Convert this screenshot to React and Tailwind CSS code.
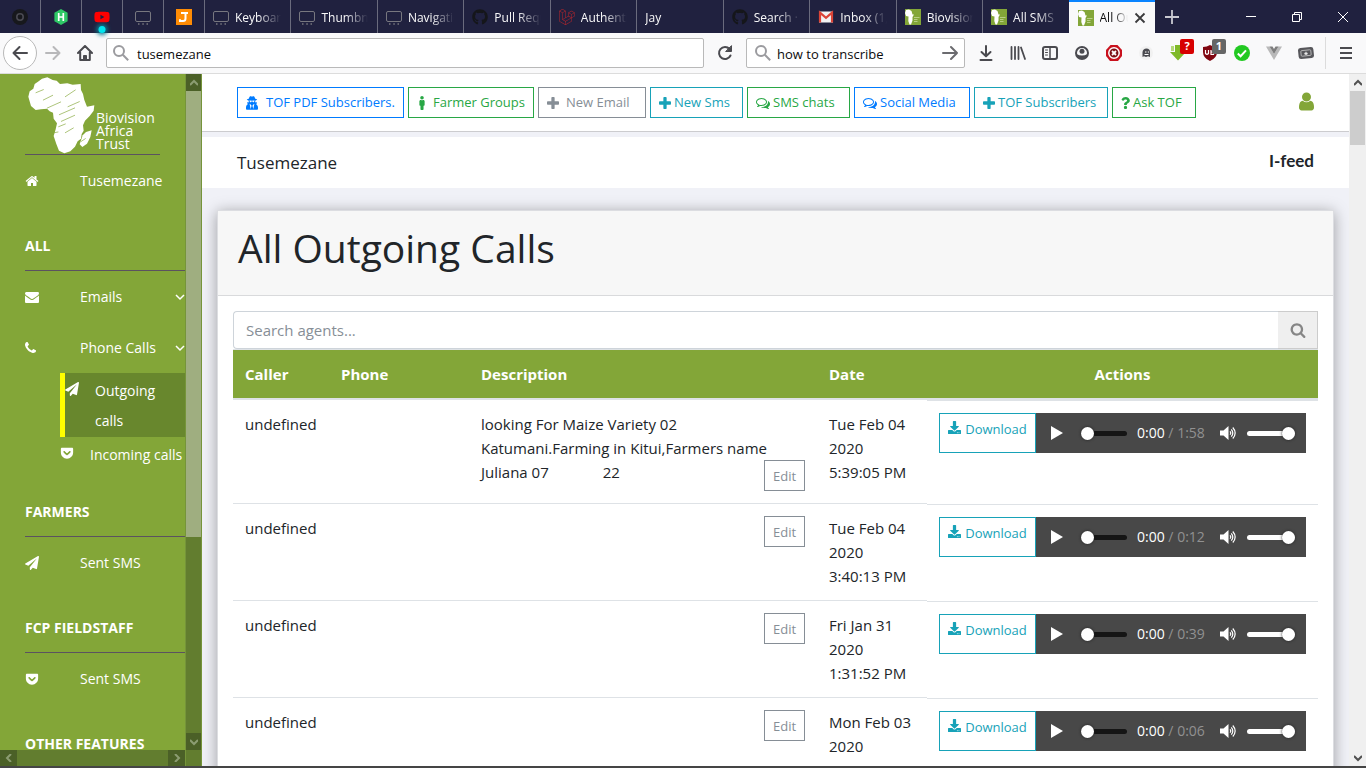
import React from "react";
import {
  FaDownload,
  FaGetPocket,
  FaGithub,
  FaLaravel,
  FaMale,
  FaPaperPlane,
  FaQuestion,
  FaUserSecret,
  FaYoutube,
} from "react-icons/fa";

const GLYPHS = {
  home: "M1472 992v480q0 26-19 45t-45 19h-384v-384h-256v384h-384q-26 0-45-19t-19-45v-480q0-1 .5-3t.5-3l575-474 575 474q1 2 1 6zm223-69l-62 74q-8 9-21 11h-3q-13 0-21-7l-692-577-692 577q-12 8-24 7-13-2-21-11l-62-74q-8-10-7-23.5t11-21.5l719-599q32-26 76-26t76 26l244 204v-195q0-14 9-23t23-9h192q14 0 23 9t9 23v408l219 182q10 8 11 21.5t-7 23.5z",
  envelope:
    "M1792 710v794q0 66-47 113t-113 47h-1472q-66 0-113-47t-47-113v-794q44 49 101 87 362 246 497 345 57 42 92.5 65.5t94.5 48 110 24.5h2q51 0 110-24.5t94.5-48 92.5-65.5q170-123 498-345 57-39 100-87zm0-294q0 79-49 151t-122 123q-376 261-468 325-10 7-42.5 31t-54 38.5-52 32.5-57.5 27-50 9h-2q-23 0-50-9t-57.5-27-52-32.5-54-38.5-42.5-31q-91-64-262-182.5t-205-142.5q-62-42-117-115.5t-55-136.5q0-78 41.5-130t118.5-52h1472q65 0 112.5 47t47.5 113z",
  phone:
    "M1600 1240q0 27-10 70.5t-21 68.5q-21 50-122 106-94 51-186 51-27 0-53-3.5t-57.5-12.5-47-14.5-55.5-20.5-49-18q-98-35-175-83-127-79-264-216t-216-264q-48-77-83-175-3-9-18-49t-20.5-55.5-14.5-47-12.5-57.5-3.5-53q0-92 51-186 56-101 106-122 25-11 68.5-21t70.5-10q14 0 21 3 18 6 53 76 11 19 30 54t35 63.5 31 53.5q3 4 17.5 25t21.5 35.5 7 28.5q0 20-28.5 50t-62 55-62 53-28.5 46q0 9 5 22.5t8.5 20.5 14 24 11.5 19q76 137 174 235t235 174q2 1 19 11.5t24 14 20.5 8.5 22.5 5q18 0 46-28.5t53-62 55-62 50-28.5q14 0 28.5 7t35.5 21.5 25 17.5q25 15 53.5 31t63.5 35 54 30q70 35 76 53 3 7 3 21z",
  search:
    "M1216 832q0-185-131.5-316.5t-316.5-131.5-316.5 131.5-131.5 316.5 131.5 316.5 316.5 131.5 316.5-131.5 131.5-316.5zm512 832q0 52-38 90t-90 38q-54 0-90-38l-343-342q-179 124-399 124-143 0-273.5-55.5t-225-150-150-225-55.5-273.5 55.5-273.5 150-225 225-150 273.5-55.5 273.5 55.5 225 150 150 225 55.5 273.5q0 220-124 399l343 343q37 37 37 90z",
  plus: "M1600 736v192q0 40-28 68t-68 28h-416v416q0 40-28 68t-68 28h-192q-40 0-68-28t-28-68v-416h-416q-40 0-68-28t-28-68v-192q0-40 28-68t68-28h416v-416q0-40 28-68t68-28h192q40 0 68 28t28 68v416h416q40 0 68 28t28 68z",
  comments:
    "M704 384q-153 0-286 52t-211.5 141-78.5 191q0 82 53 158t149 132l97 56-35 84q34-20 62-39l44-31 53 10q78 14 153 14 153 0 286-52t211.5-141 78.5-191-78.5-191-211.5-141-286-52zm0-128q191 0 353.5 68.5t256.5 186.5 94 257-94 257-256.5 186.5-353.5 68.5q-86 0-176-16-124 88-278 128-36 9-86 16h-3q-11 0-20.5-8t-11.5-21q-1-3-1-6.5t.5-6.5 2-6l2.5-5 3.5-5.5 4-5 4.5-5 4-4.5q5-6 23-25t26-29.5 22.5-29 25-38.5 20.5-44q-124-72-195-177t-71-224q0-139 94-257t256.5-186.5 353.5-68.5zm822 1169q10 24 20.5 44t25 38.5 22.5 29 26 29.5 23 25q1 1 4 4.5t4.5 5 4 5 3.5 5.5l2.5 5 2 6 .5 6.5-1 6.5q-3 14-13 22t-22 7q-50-7-86-16-154-40-278-128-90 16-176 16-271 0-472-132 58 4 88 4 161 0 309-45t264-129q125-92 192-212t67-254q0-77-23-152 129 71 204 178t75 230q0 120-71 224.5t-195 176.5z",
  user: "M1536 1399q0 109-62.5 187t-150.5 78h-854q-88 0-150.5-78t-62.5-187q0-85 8.5-160.5t31.5-152 58.5-131 94-89 134.5-34.5q131 128 313 128t313-128q76 0 134.5 34.5t94 89 58.5 131 31.5 152 8.5 160.5zm-256-887q0 159-112.5 271.5t-271.5 112.5-271.5-112.5-112.5-271.5 112.5-271.5 271.5-112.5 271.5 112.5 112.5 271.5z",
};

function Glyph({ name, viewBox = "0 0 1792 1792", className = "size-[14px]" }) {
  return (
    <svg viewBox={viewBox} fill="currentColor" aria-hidden="true" className={`shrink-0 ${className}`}>
      <path d={GLYPHS[name]} />
    </svg>
  );
}

const Plus = () => <Glyph name="plus" viewBox="192 128 1408 1408" className="size-3" />;

/* ---------- Browser tabs ---------- */

const DiscIcon = () => (
  <svg viewBox="0 0 16 16" className="size-4">
    <circle cx="8" cy="8" r="8" fill="#17181c" />
    <circle cx="8" cy="8" r="3.2" fill="none" stroke="#4a4a52" strokeWidth="1.6" />
  </svg>
);
const HexIcon = () => (
  <svg viewBox="0 0 16 16" className="size-4">
    <path d="M8 0l6.600 3.800v8.400L8 16l-6.600-3.800V3.800z" fill="#2ec866" />
    <path d="M5.700 4v8M10.300 4v8M5.700 8h4.600" stroke="#fff" strokeWidth="1.700" />
  </svg>
);
const MonitorIcon = () => (
  <svg viewBox="0 0 16 16" className="size-4" fill="none" stroke="#77777f">
    <rect x=".5" y="2.500" width="15" height="10" rx="1.500" />
    <path d="M3 15h1.500M7.300 15h1.500M11.500 15H13" strokeWidth="1.500" />
  </svg>
);
const JIcon = () => (
  <svg viewBox="0 0 16 16" className="size-4">
    <rect width="16" height="16" fill="#ff8c05" />
    <path d="M5 4h7M9.500 4v5.500q0 2.500-2.500 2.500H4v-1.700" fill="none" stroke="#fff" strokeWidth="2" />
  </svg>
);
const MailIcon = () => (
  <svg viewBox="0 0 16 16" className="size-4">
    <rect x="1" y="2.500" width="14" height="11" fill="#f2f2f2" />
    <path d="M2 13.500V3.600l6 5.200 6-5.200v9.900" fill="none" stroke="#db4437" strokeWidth="2.200" />
  </svg>
);
const AfricaIcon = () => (
  <svg viewBox="0 0 16 16" className="size-4">
    <rect width="16" height="16" fill="#83a638" />
    <path d="M0 4l1-3 3-.5L6.500 2 7.500 5.500H9L7.500 8v3.500L6 15.500H4.500L3.300 12l.2-4.500L1 7z" fill="#fff" />
    <path d="M9 8.500h5.500M9 10.500h3.500M9 12.500h3.500" stroke="#b9ce86" />
  </svg>
);

const PINNED = [
  { label: "Meet", icon: <DiscIcon /> },
  { label: "Challenges", icon: <HexIcon /> },
  { label: "Video", icon: <FaYoutube className="size-4 text-[#ff0000]" />, playing: true },
  { label: "Slides", icon: <MonitorIcon /> },
  { label: "Editor", icon: <JIcon /> },
];

const TABS = [
  { label: "Keyboard", icon: <MonitorIcon /> },
  { label: "Thumbnail", icon: <MonitorIcon /> },
  { label: "Navigation", icon: <MonitorIcon /> },
  { label: "Pull Requests", icon: <FaGithub className="size-4 text-[#15161a]" /> },
  { label: "Authentication", icon: <FaLaravel className="size-4 text-[#b8262c]" /> },
  { label: "Jay" },
  { label: "Search · code", icon: <FaGithub className="size-4 text-[#15161a]" /> },
  { label: "Inbox (1,204)", icon: <MailIcon /> },
  { label: "Biovision", icon: <AfricaIcon /> },
  { label: "All SMS", icon: <AfricaIcon /> },
];

function TabStrip() {
  return (
    <div className="flex h-[33px] shrink-0 bg-[#20213f] text-xs text-[#f9f9fa]">
      {PINNED.map((t) => (
        <button
          key={t.label}
          aria-label={t.label}
          className="relative flex w-[41px] shrink-0 items-center justify-center border-r border-[#6a6b7d]"
        >
          {t.icon}
          {t.playing && (
            <span className="absolute bottom-0 left-1/2 size-[7px] -translate-x-1/2 rounded-full bg-[#00e5ee] shadow-[0_0_4px_2px_#0a7f95]" />
          )}
        </button>
      ))}
      {TABS.map((t, i) => (
        <button
          key={t.label}
          className={`flex min-w-0 flex-1 items-center gap-[6px] pr-[9px] pl-2 ${
            i < TABS.length - 1 ? "border-r border-[#6a6b7d]" : ""
          }`}
        >
          {t.icon && <span className="shrink-0">{t.icon}</span>}
          <span className="min-w-0 flex-1 overflow-hidden pt-[2px] text-left whitespace-nowrap [mask-image:linear-gradient(to_right,#000_50%,transparent)]">
            {t.label}
          </span>
        </button>
      ))}
      <div className="flex min-w-0 flex-1 items-center gap-[6px] border-t-2 border-[#0a84ff] bg-[#f9f9fa] px-[9px] text-[#0c0c0d]">
        <span className="shrink-0">
          <AfricaIcon />
        </span>
        <span className="min-w-0 flex-1 overflow-hidden whitespace-nowrap [mask-image:linear-gradient(to_right,#000_50%,transparent)]">
          All Outgoing
        </span>
        <button aria-label="Close tab">
          <svg viewBox="0 0 12 12" className="size-3" stroke="#3b3b3d" strokeWidth="1.800">
            <path d="M1.500 1.500l9 9M10.500 1.500l-9 9" />
          </svg>
        </button>
      </div>
      <div className="flex w-[211px] shrink-0 items-center text-white">
        <button aria-label="New tab" className="flex w-[34px] justify-center">
          <svg viewBox="0 0 14 14" className="size-[14px]" stroke="#c9c9d1" strokeWidth="1.800">
            <path d="M7 0v14M0 7h14" />
          </svg>
        </button>
        <div className="ml-auto flex">
          <button aria-label="Minimize" className="flex w-[46px] justify-center">
            <svg viewBox="0 0 10 10" className="size-[10px]" stroke="#fff">
              <path d="M0 4.500h10" />
            </svg>
          </button>
          <button aria-label="Restore" className="flex w-[46px] justify-center">
            <svg viewBox="0 0 10 10" className="size-[10px]" stroke="#fff" fill="none">
              <path d="M.5 2.500h7v7h-7zM2.500 2.500v-2h7v7h-2" />
            </svg>
          </button>
          <button aria-label="Close window" className="flex w-[46px] justify-center">
            <svg viewBox="0 0 10 10" className="size-[10px]" stroke="#fff">
              <path d="M0 0l10 10M10 0L0 10" />
            </svg>
          </button>
        </div>
      </div>
    </div>
  );
}

/* ---------- Browser toolbar ---------- */

const line = { fill: "none", stroke: "#4a4a4f", strokeWidth: 2, strokeLinecap: "round", strokeLinejoin: "round" };

const Magnifier = () => (
  <svg viewBox="0 0 16 16" className="size-4 shrink-0" fill="none" stroke="#9b9b9f" strokeWidth="2">
    <circle cx="6" cy="6" r="5" />
    <path d="M9.800 9.800l5.400 5.400" />
  </svg>
);

const EXTENSIONS = [
  {
    label: "Downloads",
    icon: (
      <svg viewBox="0 0 16 16" className="size-4" {...line}>
        <path d="M8 1v10M3.500 7L8 11.300 12.500 7M2.500 15h11" />
      </svg>
    ),
  },
  {
    label: "Library",
    icon: (
      <svg viewBox="0 0 16 16" className="size-4" {...line}>
        <path d="M1.500 2v12M5 2v12M8.500 2v12M11 2.500l4 11.500" strokeWidth="1.800" />
      </svg>
    ),
  },
  {
    label: "Sidebars",
    icon: (
      <svg viewBox="0 0 16 16" className="size-4" {...line}>
        <rect x="1" y="2" width="14" height="12" rx="2" />
        <path d="M8 2v12" strokeWidth="1.500" />
        <path d="M3.500 5h2M3.500 7.500h2M3.500 10h2" strokeWidth="1" />
      </svg>
    ),
  },
  {
    label: "Account",
    icon: (
      <svg viewBox="0 0 16 16" className="size-4">
        <circle cx="8" cy="8" r="6" fill="none" stroke="#4a4a4f" strokeWidth="2" />
        <circle cx="8" cy="6.300" r="2.500" fill="#4a4a4f" />
        <path d="M2.500 9q5.500 3 11 0-1 5-5.500 5T2.500 9z" fill="#4a4a4f" />
      </svg>
    ),
  },
  {
    label: "Blocker",
    icon: (
      <svg viewBox="0 0 16 16" className="size-4">
        <path d="M4.500 0h7L16 5v6l-4 5H4L0 11V5z" fill="#c9111d" />
        <circle cx="8" cy="8" r="5.200" fill="#7d1016" stroke="#fff" strokeWidth="1.500" />
        <path d="M6 6l4 4M10 6l-4 4" stroke="#fff" strokeWidth="1.800" />
      </svg>
    ),
  },
  {
    label: "Ghost",
    icon: (
      <svg viewBox="0 0 16 16" className="size-4">
        <circle cx="8" cy="8" r="7" fill="#f1f1f1" />
        <path d="M4.500 12V7Q5 3.500 8.500 3.500T12 7v5l-2-.8-2 .8-2-.8z" fill="#4a4a4f" />
        <path d="M7 7h1.500M9.800 7H11M6.500 9.500h4" stroke="#fff" />
      </svg>
    ),
  },
  {
    label: "Download helper",
    badge: "?",
    badgeClass: "bg-[#d70000]",
    icon: (
      <svg viewBox="0 0 16 16" className="size-4">
        <path d="M5 0h6v7h5l-8 8.500L0 7h5z" fill="#7fb928" />
        <path d="M1 1h3v5H1z" fill="#b5d97a" />
      </svg>
    ),
  },
  {
    label: "Shield",
    badge: "1",
    badgeClass: "bg-[#666]",
    icon: (
      <svg viewBox="0 0 16 16" className="size-4">
        <path d="M8 0q3 2 7 2v5q0 6-7 9-7-3-7-9V2q4 0 7-2z" fill="#800610" />
        <path d="M3.500 5v3.500q1.500 1.500 3 0V5M9 5v4.500h2.500V7H9" fill="none" stroke="#fff" strokeWidth="1.200" />
      </svg>
    ),
  },
  {
    label: "Verified",
    icon: (
      <svg viewBox="0 0 16 16" className="size-4">
        <circle cx="8" cy="8" r="8" fill="#22c922" />
        <path d="M3.800 8.500l2.800 2.700 5.400-5.800" fill="none" stroke="#fff" strokeWidth="2" />
      </svg>
    ),
  },
  {
    label: "Vue",
    icon: (
      <svg viewBox="0 0 16 16" className="size-4">
        <path d="M0 1.500h3.500L8 9l4.500-7.500H16L8 15z" fill="#b9b9b9" />
        <path d="M3.500 1.500h3L8 4l1.500-2.500h3L8 9z" fill="#7d7d7d" />
      </svg>
    ),
  },
  {
    label: "Container",
    icon: (
      <svg viewBox="0 0 16 16" className="size-4">
        <rect x=".3" y="2.500" width="15.400" height="11" rx="2.500" fill="#57575b" transform="rotate(-6 8 8)" />
        <rect x="3" y="5.200" width="10" height="5.600" rx="1" fill="none" stroke="#c8c8c8" strokeWidth=".8" transform="rotate(-6 8 8)" />
        <path d="M8 6.300l.7 1.400 1.500.2-1.100 1 .3 1.400L8 9.600l-1.400.7.300-1.400-1.100-1 1.500-.2z" fill="#e8e8e8" />
      </svg>
    ),
  },
];

function Toolbar() {
  return (
    <div className="flex h-[41px] shrink-0 items-center border-b border-[#dcdcdc] bg-[#f9f9fa] pl-[3px] text-[13px] text-[#0c0c0d]">
      <button
        aria-label="Back"
        className="flex size-[34px] shrink-0 items-center justify-center rounded-full border border-[#b9b9b9] bg-white"
      >
        <svg viewBox="0 0 16 16" className="size-4" {...line}>
          <path d="M15 8H1.500M7.500 2L1.500 8l6 6" />
        </svg>
      </button>
      <button aria-label="Forward" className="flex w-8 shrink-0 justify-center">
        <svg viewBox="0 0 16 16" className="size-4" {...line} stroke="#b8b8ba">
          <path d="M1 8h13.500M8.500 2l6 6-6 6" />
        </svg>
      </button>
      <button aria-label="Home" className="flex w-8 shrink-0 justify-center">
        <svg viewBox="0 0 16 16" className="size-4" {...line}>
          <path d="M1 8l7-7 7 7M3.200 7.500V15h9.600V7.500" />
          <path d="M6.500 15v-4.500h3V15z" fill="#4a4a4f" strokeWidth="1" />
        </svg>
      </button>
      <label className="ml-[5px] flex h-[30px] min-w-0 flex-1 items-center gap-2 rounded-xs border border-[#b9b9b9] bg-white px-[6px]">
        <Magnifier />
        <input aria-label="Address" defaultValue="tusemezane" className="min-w-0 flex-1 pt-[3px] outline-none" />
      </label>
      <button aria-label="Reload" className="flex w-[42px] shrink-0 justify-center">
        <svg viewBox="0 0 16 16" className="size-4" {...line}>
          <path d="M13.500 10.500A6 6 0 1 1 12.500 4" />
          <path d="M14.500 1v5.500H9z" fill="#4a4a4f" strokeWidth="1" />
        </svg>
      </button>
      <label className="flex h-[30px] w-[219px] shrink-0 items-center gap-[6px] rounded-xs border border-[#b9b9b9] bg-white px-2">
        <Magnifier />
        <input aria-label="Web search" defaultValue="how to transcribe" className="min-w-0 flex-1 pt-[3px] outline-none" />
        <button aria-label="Go" className="translate-x-[2px]">
          <svg viewBox="0 0 16 16" className="size-4" {...line} stroke="#6b6b6f">
            <path d="M1 8h14M9 2l6 6-6 6" />
          </svg>
        </button>
      </label>
      <div className="ml-[5px] flex shrink-0">
        {EXTENSIONS.map((e) => (
          <button key={e.label} aria-label={e.label} className="relative flex h-8 w-8 items-center justify-center">
            {e.icon}
            {e.badge && (
              <span
                className={`absolute top-[2px] right-0 flex h-[15px] w-[14px] items-center justify-center rounded-xs text-[11px] font-bold text-white ${e.badgeClass}`}
              >
                {e.badge}
              </span>
            )}
          </button>
        ))}
      </div>
      <div className="ml-[3px] flex h-8 w-[41px] shrink-0 items-center justify-center border-l border-[#dcdcdc]">
        <button aria-label="Menu">
          <svg viewBox="0 0 12 12" className="size-3" stroke="#4a4a4f" strokeWidth="2">
            <path d="M0 1h12M0 6h12M0 11h12" />
          </svg>
        </button>
      </div>
    </div>
  );
}

/* ---------- Sidebar ---------- */

function Logo() {
  return (
    <div className="mr-[25px] ml-[25px] flex h-[81px] w-[135px] border-b border-[#5b5260] text-white">
      <svg viewBox="75 10 210 240" className="h-20 w-[70px] shrink-0">
        <path
          d="M85 78l4-16 11-8 4-14 12-8 10-8 16-4 16 8 12 2 10 10 22-2 16 4 24-2 1 18 6 12 4 18 8 20 22-4-2 16-12 16-14 14-6 14 2 16-6 10-2 14-10 8-8 16-14 14-18 6-16-8-8-20-8-24 6-20 4-18-10-14-2-18-10-4-8-8-18 2-16 2-14-12z"
          fill="#fff"
        />
        <path d="M248 194l10-10 17-5-4 20-10 20-14 10-8-8z" fill="#fff" />
        <path
          d="M108 66l22-9M130 88l28-14M142 112l40-18M196 78l30-20M178 132l46-20M184 152l40-18M176 168l20-8M196 186l24-14M158 187l16-3M244 212l12-8M204 108l34-15"
          stroke="#83a638"
          strokeWidth="2"
          strokeLinecap="round"
        />
      </svg>
      <p className="pt-[37px] pl-px font-[family-name:Open_Sans] text-sm leading-[13px]">
        Biovision
        <br />
        Africa
        <br />
        Trust
      </p>
    </div>
  );
}

function SideHeading({ children }) {
  return (
    <h2 className="ml-[25px] flex h-[65px] items-end border-b border-[#5b5260] pb-[14px] text-sm leading-5 font-bold uppercase">
      {children}
    </h2>
  );
}

function SideLink({ icon, children, expandable }) {
  return (
    <a href="#" className="flex h-[51px] items-center pl-[25px]">
      <span className="w-[55px]">{icon}</span>
      <span className="flex-1">{children}</span>
      {expandable && (
        <svg viewBox="0 0 10 10" className="size-[10px]" fill="none" stroke="currentColor" strokeWidth="1.500">
          <path d="M1 3l4 4 4-4" />
        </svg>
      )}
    </a>
  );
}

const Arrow = ({ d, color }) => (
  <svg viewBox="0 0 8 8" className="size-2" fill="none" stroke={color} strokeWidth="2">
    <path d={d} />
  </svg>
);
const UP = "M0 6l4-4 4 4";
const DOWN = "M0 2l4 4 4-4";

function Sidebar() {
  return (
    <aside className="flex w-[202px] shrink-0 bg-[#83a638]">
      <div className="flex min-w-0 flex-1 flex-col">
        <nav className="min-h-0 flex-1 overflow-hidden text-sm text-white">
          <Logo />
          <SideLink icon={<Glyph name="home" />}>Tusemezane</SideLink>
          <SideHeading>All</SideHeading>
          <SideLink icon={<Glyph name="envelope" />} expandable>
            Emails
          </SideLink>
          <SideLink icon={<Glyph name="phone" viewBox="192 0 1792 1792" />} expandable>
            Phone Calls
          </SideLink>
          <a href="#" className="ml-[60px] flex border-l-[5px] border-[#ffff00] bg-[#68872d] pt-[3px] pb-px leading-[30px]">
            <FaPaperPlane className="mt-[6px] size-[14px] shrink-0" />
            <span className="ml-4 w-[70px]">Outgoing calls</span>
          </a>
          <a href="#" className="ml-[60px] flex h-[35px] items-center whitespace-nowrap">
            <FaGetPocket className="size-[14px] shrink-0 -translate-y-[2px]" />
            <span className="ml-4">Incoming calls</span>
          </a>
          <SideHeading>Farmers</SideHeading>
          <SideLink icon={<FaPaperPlane className="size-[14px]" />}>Sent SMS</SideLink>
          <SideHeading>FCP Fieldstaff</SideHeading>
          <SideLink icon={<FaGetPocket className="size-[14px]" />}>Sent SMS</SideLink>
          <SideHeading>Other Features</SideHeading>
        </nav>
        <div className="flex h-4 shrink-0 justify-between bg-[#627d2f]">
          <span className="flex w-[17px] items-center justify-center bg-[#4b6027]">
            <Arrow d="M6 0L2 4l4 4" color="#8c9c72" />
          </span>
          <span className="flex w-[17px] items-center justify-center bg-[#4b6027]">
            <Arrow d="M2 0l4 4-4 4" color="#8c9c72" />
          </span>
        </div>
      </div>
      <div className="flex w-[17px] shrink-0 flex-col border-x border-[#75943a] bg-[#627d2f] pb-4">
        <span className="flex h-[17px] items-center justify-center bg-[#4b6027]">
          <Arrow d={UP} color="#8c9c72" />
        </span>
        <div className="flex flex-1 flex-col">
          <div className="flex-[25] bg-[#9fae80]" />
          <div className="flex-[11]" />
        </div>
        <span className="flex h-[17px] items-center justify-center bg-[#4b6027]">
          <Arrow d={DOWN} color="#8c9c72" />
        </span>
      </div>
    </aside>
  );
}

/* ---------- Main content ---------- */

const ACTIONS = [
  { label: "TOF PDF Subscribers.", icon: <FaUserSecret className="h-[14px] w-3" />, style: "w-[167px] gap-2 border-[#007bff] text-[#007bff]" },
  { label: "Farmer Groups", icon: <FaMale className="h-[14px] w-[10px]" />, style: "w-[126px] gap-[6px] border-[#28a745] text-[#28a745]" },
  { label: "New Email", icon: <Plus />, style: "w-[108px] gap-[7px] border-[#868e96] text-[#868e96]" },
  { label: "New Sms", icon: <Plus />, style: "w-[93px] gap-[3px] border-[#17a2b8] text-[#17a2b8]" },
  { label: "SMS chats", icon: <Glyph name="comments" />, style: "w-[103px] gap-[3px] border-[#28a745] text-[#28a745]" },
  { label: "Social Media", icon: <Glyph name="comments" />, style: "w-[116px] gap-[3px] border-[#007bff] text-[#007bff]" },
  { label: "TOF Subscribers", icon: <Plus />, style: "w-[134px] gap-[3px] border-[#17a2b8] text-[#17a2b8]" },
  { label: "Ask TOF", icon: <FaQuestion className="h-3 w-[9px]" />, style: "w-[84px] gap-[3px] border-[#28a745] text-[#28a745]" },
];

const CALLS = [
  {
    description: (
      <>
        looking For Maize Variety 02
        <br />
        Katumani.Farming in Kitui,Farmers name
        <br />
        <span className="inline-flex gap-[54px]">
          <span>Juliana 07</span>
          <span>22</span>
        </span>
      </>
    ),
    day: "Tue Feb 04 2020",
    time: "5:39:05 PM",
    length: "1:58",
  },
  { day: "Tue Feb 04 2020", time: "3:40:13 PM", length: "0:12" },
  { day: "Fri Jan 31 2020", time: "1:31:52 PM", length: "0:39" },
  { day: "Mon Feb 03 2020", time: "11:28:31 PM", length: "0:06" },
];

const SLIDER =
  "h-[5px] appearance-none rounded-full [&::-webkit-slider-thumb]:size-[13px] [&::-webkit-slider-thumb]:appearance-none [&::-webkit-slider-thumb]:rounded-full [&::-webkit-slider-thumb]:bg-white [&::-webkit-slider-thumb]:shadow-[0_0_3px_#222]";

function Player({ length }) {
  return (
    <div className="flex h-10 min-w-0 flex-1 items-center bg-[#484848] pr-[11px] pl-[15px] text-sm text-white">
      <button aria-label="Play">
        <svg viewBox="0 0 12 14" className="h-[14px] w-3" fill="#fff">
          <path d="M0 0l12 7-12 7z" />
        </svg>
      </button>
      <input type="range" aria-label="Position" defaultValue="0" className={`ml-[18px] w-[46px] bg-[#151515] ${SLIDER}`} />
      <span className="ml-[10px] flex-1 whitespace-nowrap">
        0:00 <span className="text-[#919191]">/ {length}</span>
      </span>
      <button aria-label="Mute">
        <svg viewBox="0 0 17 14" className="h-[14px] w-[17px]" fill="none" stroke="#fff" strokeWidth="1.200">
          <path d="M0 4.500h3.500L8.500 0v14l-5-4.500H0z" fill="#fff" stroke="none" />
          <path d="M10 5.300q1.500 1.700 0 3.400M11.300 3.300q3 3.700 0 7.400M12.800 1.500q4.700 5.500 0 11" />
        </svg>
      </button>
      <input type="range" aria-label="Volume" defaultValue="100" className={`ml-[10px] w-12 bg-white ${SLIDER}`} />
    </div>
  );
}

function CallsTable() {
  const cell = "border-b border-[#dee2e6] p-3";
  const head = "border-t border-b-2 border-[#dee2e6] p-3";
  return (
    <table className="w-full table-fixed border-separate border-spacing-0 text-[15px] leading-6">
      <colgroup>
        <col className="w-[96px]" />
        <col className="w-[140px]" />
        <col />
        <col className="w-[110px]" />
        <col className="w-[391px]" />
      </colgroup>
      <thead>
        <tr className="bg-[#83a638] text-left text-white">
          <th className={head}>Caller</th>
          <th className={head}>Phone</th>
          <th className={head}>Description</th>
          <th className={head}>Date</th>
          <th className={`${head} text-center`}>Actions</th>
        </tr>
      </thead>
      <tbody>
        {CALLS.map((c) => (
          <tr key={c.time} className="align-top">
            <td className={cell}>undefined</td>
            <td className={cell} />
            <td className={cell}>
              <div className="flex justify-end">
                {c.description && <p className="min-w-0 flex-1 pb-[7px] whitespace-nowrap">{c.description}</p>}
                <button className="h-[31px] w-[41px] shrink-0 self-end border border-[#868e96] text-[13px] text-[#868e96]">
                  Edit
                </button>
              </div>
            </td>
            <td className={cell}>
              {c.day}
              <br />
              {c.time}
            </td>
            <td className="border-t border-[#dee2e6] p-3">
              <div className="flex">
                <a
                  href="#"
                  className="flex h-10 w-[97px] shrink-0 justify-center gap-1 border border-[#17a2b8] pt-[3px] text-[13px] text-[#17a2b8]"
                >
                  <FaDownload className="mt-1 size-[13px]" />
                  Download
                </a>
                <Player length={c.length} />
              </div>
            </td>
          </tr>
        ))}
      </tbody>
    </table>
  );
}

function Main() {
  return (
    <main className="min-w-0 flex-1 overflow-hidden bg-[#f0f1f7] text-[#212529]">
      <header className="flex h-[58px] items-center border-b border-[#cccccf] bg-white pr-8 pl-[35px]">
        <div className="flex gap-1">
          {ACTIONS.map((a) => (
            <button
              key={a.label}
              className={`flex h-[31px] items-center border pl-2 text-[13px] whitespace-nowrap ${a.style}`}
            >
              {a.icon}
              {a.label}
            </button>
          ))}
        </div>
        <button aria-label="Account" className="ml-auto pb-[2px] text-[#83a638]">
          <Glyph name="user" className="size-[21px]" />
        </button>
      </header>
      <div className="mt-[5px] flex h-[51px] items-center justify-between bg-white px-[35px]">
        <span className="text-[17px]">Tusemezane</span>
        <span className="pb-1 font-[family-name:Lato] text-[17px] font-bold">I-feed</span>
      </div>
      <section className="mx-[15px] mt-[22px] border border-[#dcdde1] bg-white shadow-[0_2px_14px_rgba(0,0,0,0.35)]">
        <div className="h-[85px] border-b border-[#d9dadc] bg-[#f7f7f7] px-5 pt-3">
          <h1 className="text-[39px] leading-[50px]">All Outgoing Calls</h1>
        </div>
        <div className="p-[15px]">
          <div className="flex h-[38px]">
            <input
              aria-label="Search agents"
              placeholder="Search agents..."
              className="min-w-0 flex-1 rounded-l border border-r-0 border-[#ced4da] px-3 text-[15px] outline-none placeholder:text-[#868e96]"
            />
            <button
              aria-label="Search"
              className="flex w-10 items-center justify-center border border-l-0 border-[#ccc] bg-[#efefef] text-[#868686]"
            >
              <Glyph name="search" className="size-4" />
            </button>
          </div>
          <CallsTable />
        </div>
      </section>
    </main>
  );
}

function PageScrollbar() {
  return (
    <div className="flex w-[17px] shrink-0 flex-col bg-[#f0f0f0]">
      <span className="flex h-[17px] items-center justify-center">
        <Arrow d={UP} color="#505050" />
      </span>
      <div className="flex-1 px-px">
        <div className="h-[54px] bg-[#cdcdcd]" />
      </div>
      <span className="flex h-[17px] items-center justify-center">
        <Arrow d={DOWN} color="#505050" />
      </span>
    </div>
  );
}

export default function App() {
  return (
    <div className="flex h-screen flex-col overflow-hidden border-b-2 border-[#454545] bg-white font-['Open_Sans','Noto_Sans',sans-serif]">
      <TabStrip />
      <Toolbar />
      <div className="flex min-h-0 flex-1">
        <Sidebar />
        <Main />
        <PageScrollbar />
      </div>
    </div>
  );
}
